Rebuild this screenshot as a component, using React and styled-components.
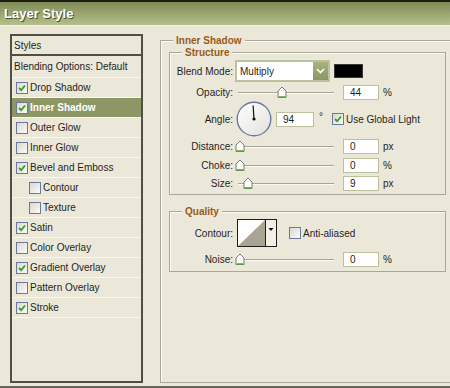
import React from "react";
import styled, { createGlobalStyle } from "styled-components";

const GlobalStyle = createGlobalStyle`
  html, body {
    margin: 0;
    padding: 0;
    background: #ebe8da;
  }
  body {
    font-family: "Liberation Sans", Arial, sans-serif;
    font-size: 10px;
    color: #1f1f1a;
  }
`;

const Window = styled.div`
  width: 450px;
  height: 388px;
  box-sizing: border-box;
  background: #ebe8da;
  border-bottom: 2px solid #67665c;
  display: flex;
  flex-direction: column;
  overflow: hidden;
`;

const TitleBar = styled.div`
  height: 23px;
  border-top: 2px solid #1c1e14;
  border-bottom: 1px solid #f6f4ea;
  background: linear-gradient(#7d8b56, #b6bf8a);
  display: flex;
  align-items: center;
  padding-left: 4px;
  color: #fff;
  font-weight: bold;
  font-size: 13px;
  text-shadow: 1px 1px 0 #4b5330;
`;

const Body = styled.div`
  flex: 1;
  display: flex;
  padding: 8px 0 3px 10px;
  min-height: 0;
`;

/* ---------- left style list ---------- */

const StyleList = styled.div`
  width: 133px;
  box-sizing: border-box;
  border: 2px solid #4f4f45;
  display: flex;
  flex-direction: column;
`;

const ListHeader = styled.div`
  height: 18px;
  border-bottom: 2px solid #4f4f45;
  display: flex;
  align-items: center;
  padding-left: 2px;
`;

const ListBlending = styled.div`
  height: 21px;
  border-bottom: 1px solid #f9f8f1;
  display: flex;
  align-items: center;
  padding-left: 2px;
`;

const ListItem = styled.div`
  height: 19px;
  border-bottom: 1px solid #f9f8f1;
  display: flex;
  align-items: center;
  padding-left: ${(p) => (p.$indent ? 17 : 4)}px;
  background: ${(p) => (p.$active ? "#8c9765" : "transparent")};
  color: ${(p) => (p.$active ? "#fff" : "inherit")};
  font-weight: ${(p) => (p.$active ? "bold" : "normal")};
`;

const Box = styled.span`
  width: 12px;
  height: 12px;
  box-sizing: border-box;
  flex: none;
  border: 1px solid #6b789a;
  background: linear-gradient(135deg, #d9d8cf, #fbfbf8);
  display: flex;
  align-items: center;
  justify-content: center;
  margin-right: ${(p) => p.$gap ?? 2}px;
  margin-left: ${(p) => p.$left ?? 0}px;
`;

function Check({ on, gap, left }) {
  return (
    <Box $gap={gap} $left={left}>
      {on && (
        <svg width="8" height="8" viewBox="0 0 8 8">
          <path d="M1 4 L3.2 6.2 L7 1.5" fill="none" stroke="#3a9a24" strokeWidth="1.8" />
        </svg>
      )}
    </Box>
  );
}

/* ---------- right groups ---------- */

const RightArea = styled.div`
  flex: 1;
  margin-left: 17px;
  display: flex;
`;

const Group = styled.fieldset`
  margin: 0;
  padding: 0;
  min-inline-size: 0;
  flex: ${(p) => (p.$fill ? 1 : "none")};
  border: 1px solid #a9a797;
  border-right: ${(p) => (p.$open ? "none" : "1px solid #a9a797")};
  box-shadow: inset 1px 1px 0 #fbfaf3;
  margin-top: ${(p) => p.$top ?? 0}px;
`;

const GroupTitle = styled.legend`
  margin-left: 12px;
  padding: 0 3px;
  font-weight: bold;
  font-size: 10px;
  line-height: 13px;
  color: #9a5a16;
  background: #ebe8da;
`;

const GroupBody = styled.div`
  padding: ${(p) => p.$pad};
  display: flex;
  flex-direction: column;
`;

const Row = styled.div`
  display: flex;
  align-items: center;
  height: ${(p) => p.$h}px;
  margin-top: ${(p) => p.$mt}px;
`;

const Label = styled.span`
  width: 63px;
  margin-right: 3px;
  text-align: right;
  flex: none;
`;

const Select = styled.div`
  width: 95px;
  height: 22px;
  box-sizing: border-box;
  margin-left: -1px;
  border: 2px solid #bcc39c;
  background: #fff;
  display: flex;
  align-items: center;
  padding-left: 3px;
`;

const SelectButton = styled.span`
  margin-left: auto;
  width: 15px;
  height: 18px;
  background: linear-gradient(#a9b27f, #8c9664);
  display: flex;
  align-items: center;
  justify-content: center;
`;

const Swatch = styled.span`
  width: 29px;
  height: 14px;
  box-sizing: border-box;
  margin-left: 4px;
  background: #000;
  border: 1px solid #3a3a34;
`;

const Slider = styled.div`
  position: relative;
  width: 100px;
  height: 16px;
  flex: none;
  &::before {
    content: "";
    position: absolute;
    left: 2px;
    right: 2px;
    top: 8px;
    height: 1px;
    background: #a5a497;
    box-shadow: 0 1px 0 #fbfaf3;
  }
`;

const Thumb = styled.svg`
  position: absolute;
  top: 2px;
`;

function SliderControl({ at }) {
  return (
    <Slider>
      <Thumb width="10" height="13" viewBox="0 0 10 13" style={{ left: at - 5 }}>
        <path d="M1 5 L5 1 L9 5 L9 11.5 L1 11.5 Z" fill="#fdfdfb" stroke="#7b7b70" />
        <path d="M1.5 11 H8.5" stroke="#58a53a" strokeWidth="1.6" />
      </Thumb>
    </Slider>
  );
}

const NumberBox = styled.span`
  width: ${(p) => p.$w ?? 36}px;
  height: 15px;
  box-sizing: border-box;
  margin-left: ${(p) => p.$ml ?? 7}px;
  border: 1px solid #bac19b;
  background: #fff;
  display: flex;
  align-items: center;
  padding-left: 6px;
  flex: none;
`;

const Unit = styled.span`
  margin-left: ${(p) => p.$ml ?? 4}px;
  align-self: ${(p) => (p.$raise ? "flex-start" : "center")};
  margin-top: ${(p) => (p.$raise ? 10 : 0)}px;
`;

function Dial() {
  return (
    <svg width="36" height="36" viewBox="0 0 36 36">
      <defs>
        <linearGradient id="dialFill" x1="0" y1="0" x2="1" y2="1">
          <stop offset="0" stopColor="#ffffff" />
          <stop offset="1" stopColor="#e2e1db" />
        </linearGradient>
      </defs>
      <circle cx="18" cy="18" r="16.8" fill="url(#dialFill)" stroke="#6c78a0" strokeWidth="1.4" />
      <line x1="18" y1="18" x2="17.1" y2="4.5" stroke="#111" strokeWidth="1.2" />
      <circle cx="18" cy="18" r="1.6" fill="#111" />
    </svg>
  );
}

function ContourPicker() {
  return (
    <svg width="40" height="28" viewBox="0 0 40 28" style={{ marginLeft: 1 }}>
      <rect x="0.5" y="0.5" width="28" height="27" fill="#fff" stroke="#1e1e1e" />
      <polygon points="1,27 28,1 28,27" fill="#a9a494" />
      <rect x="28.5" y="0.5" width="11" height="27" fill="#f1efe6" stroke="#1e1e1e" />
      <polygon points="31.5,9 36.5,9 34,12" fill="#111" />
    </svg>
  );
}

const styleItems = [
  { name: "Drop Shadow", on: true },
  { name: "Inner Shadow", on: true, active: true },
  { name: "Outer Glow" },
  { name: "Inner Glow" },
  { name: "Bevel and Emboss", on: true },
  { name: "Contour", indent: true },
  { name: "Texture", indent: true },
  { name: "Satin", on: true },
  { name: "Color Overlay" },
  { name: "Gradient Overlay", on: true },
  { name: "Pattern Overlay" },
  { name: "Stroke", on: true },
];

export default function App() {
  return (
    <>
      <GlobalStyle />
      <Window>
        <TitleBar>Layer Style</TitleBar>
        <Body>
          <StyleList>
            <ListHeader>Styles</ListHeader>
            <ListBlending>Blending Options: Default</ListBlending>
            {styleItems.map((item) => (
              <ListItem key={item.name} $indent={item.indent} $active={item.active}>
                <Check on={item.on} />
                {item.name}
              </ListItem>
            ))}
          </StyleList>

          <RightArea>
            <Group $fill $open>
              <GroupTitle>Inner Shadow</GroupTitle>
              <GroupBody $pad="0 4px 0 8px">
                <Group style={{ marginTop: -1 }}>
                  <GroupTitle>Structure</GroupTitle>
                  <GroupBody $pad="0 0 3px 0">
                    <Row $h={22} $mt={1}>
                      <Label>Blend Mode:</Label>
                      <Select>
                        Multiply
                        <SelectButton>
                          <svg width="9" height="6" viewBox="0 0 9 6">
                            <path d="M1 1 L4.5 4.5 L8 1" fill="none" stroke="#fff" strokeWidth="1.6" />
                          </svg>
                        </SelectButton>
                      </Select>
                      <Swatch />
                    </Row>
                    <Row $h={16} $mt={2}>
                      <Label>Opacity:</Label>
                      <SliderControl at={46} />
                      <NumberBox>44</NumberBox>
                      <Unit>%</Unit>
                    </Row>
                    <Row $h={36} $mt={1}>
                      <Label>Angle:</Label>
                      <Dial />
                      <NumberBox $w={38} $ml={4}>94</NumberBox>
                      <Unit $ml={5} $raise>°</Unit>
                      <Check on gap={2} left={9} />
                      Use Global Light
                    </Row>
                    <Row $h={16} $mt={1}>
                      <Label>Distance:</Label>
                      <SliderControl at={4} />
                      <NumberBox>0</NumberBox>
                      <Unit>px</Unit>
                    </Row>
                    <Row $h={16} $mt={3}>
                      <Label>Choke:</Label>
                      <SliderControl at={4} />
                      <NumberBox>0</NumberBox>
                      <Unit>%</Unit>
                    </Row>
                    <Row $h={16} $mt={2}>
                      <Label>Size:</Label>
                      <SliderControl at={12} />
                      <NumberBox>9</NumberBox>
                      <Unit>px</Unit>
                    </Row>
                  </GroupBody>
                </Group>

                <Group $top={10}>
                  <GroupTitle>Quality</GroupTitle>
                  <GroupBody $pad="0 0 4px 0">
                    <Row $h={28} $mt={1}>
                      <Label>Contour:</Label>
                      <ContourPicker />
                      <Check gap={2} left={12} />
                      Anti-aliased
                    </Row>
                    <Row $h={16} $mt={4}>
                      <Label>Noise:</Label>
                      <SliderControl at={4} />
                      <NumberBox>0</NumberBox>
                      <Unit>%</Unit>
                    </Row>
                  </GroupBody>
                </Group>
              </GroupBody>
            </Group>
          </RightArea>
        </Body>
      </Window>
    </>
  );
}
